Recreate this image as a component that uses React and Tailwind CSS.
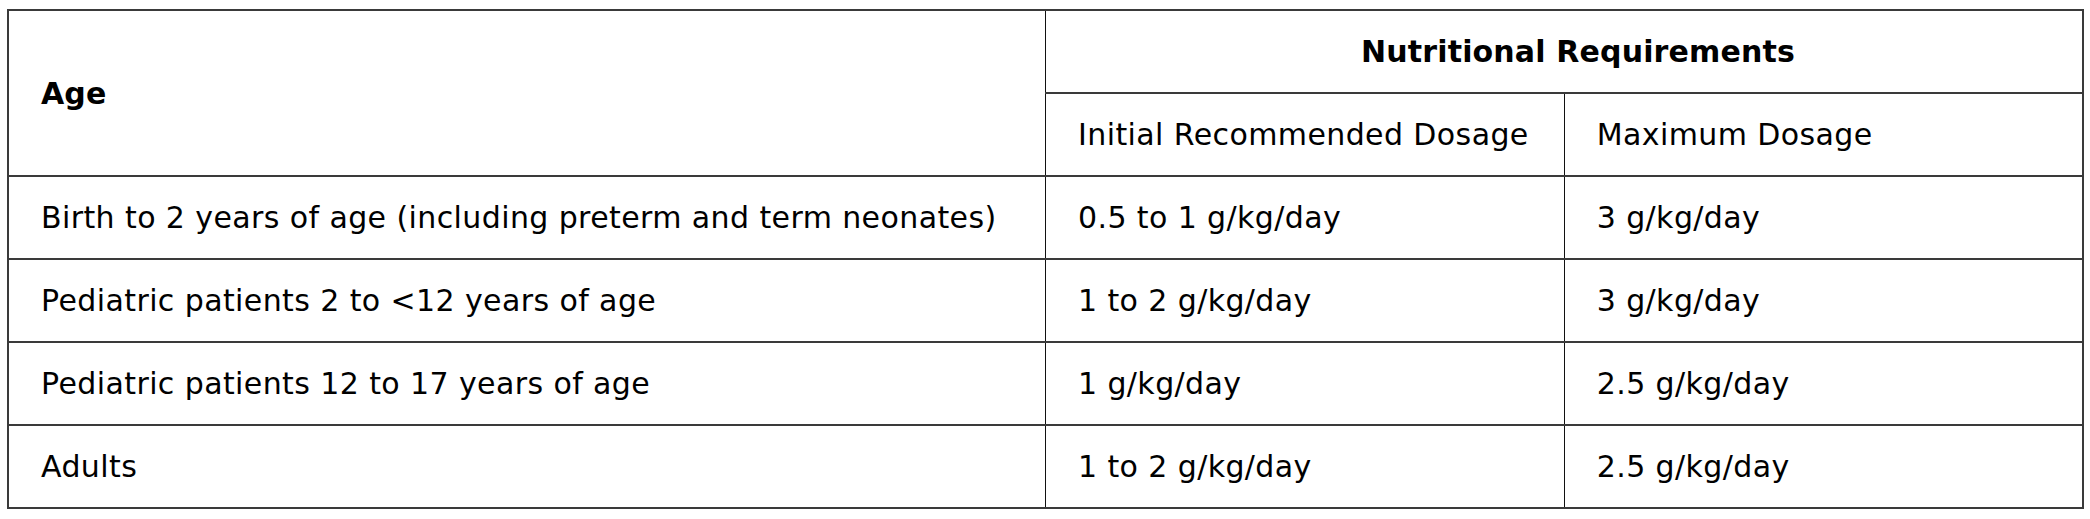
const rows = [
  ["Birth to 2 years of age (including preterm and term neonates)", "0.5 to 1 g/kg/day", "3 g/kg/day"],
  ["Pediatric patients 2 to <12 years of age", "1 to 2 g/kg/day", "3 g/kg/day"],
  ["Pediatric patients 12 to 17 years of age", "1 g/kg/day", "2.5 g/kg/day"],
  ["Adults", "1 to 2 g/kg/day", "2.5 g/kg/day"],
];

export default function App() {
  return (
    <div className="bg-white min-h-screen pt-[9px] pl-[7px] pr-[6px] font-['DejaVu_Sans',sans-serif] text-[30px] tracking-[0.4px] text-black">
      <table className="w-full border-collapse border-2 border-[#3a3a3a] table-fixed">
        <colgroup>
          <col className="w-[50%]" />
          <col className="w-[25%]" />
          <col className="w-[25%]" />
        </colgroup>
        <thead>
          <tr className="h-[83px]">
            <th rowSpan={2} className="border-y-2 border-[#3a3a3a] px-8 text-left font-bold tracking-[0.15px] align-middle">
              Age
            </th>
            <th colSpan={2} className="border-y-2 border-l border-[#3a3a3a] border-l-[#111] pl-[60px] pr-8 text-center font-bold tracking-[0.15px]">
              Nutritional Requirements
            </th>
          </tr>
          <tr className="h-[83px]">
            <td className="border-y-2 border-l border-[#3a3a3a] border-l-[#111] px-8 font-normal">
              Initial Recommended Dosage
            </td>
            <td className="border-y-2 border-l border-[#3a3a3a] border-l-[#111] px-8 font-normal">
              Maximum Dosage
            </td>
          </tr>
        </thead>
        <tbody>
          {rows.map((r, i) => (
            <tr key={i} className="h-[83px]">
              <td className="border-y-2 border-[#3a3a3a] px-8">{r[0]}</td>
              <td className="border-y-2 border-l border-[#3a3a3a] border-l-[#111] px-8">{r[1]}</td>
              <td className="border-y-2 border-l border-[#3a3a3a] border-l-[#111] px-8">{r[2]}</td>
            </tr>
          ))}
        </tbody>
      </table>
    </div>
  );
}
